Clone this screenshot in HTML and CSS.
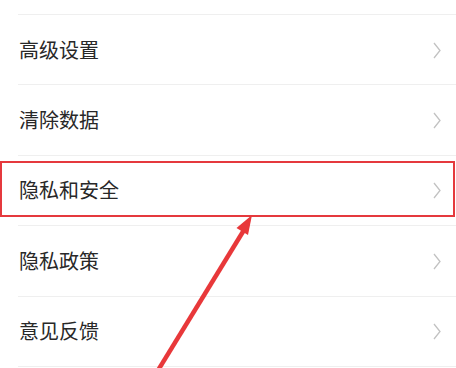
FILE: index.html
```html
<!DOCTYPE html>
<html lang="zh-CN">
<head>
<meta charset="utf-8">
<link rel="stylesheet" href="styles.css">
</head>
<body>
<div class="page">
  <div class="list">
    <div class="top-gap"></div>
    <div class="row"><span class="label">高级设置</span><svg class="chev" width="8" height="17" viewBox="0 0 8 17"><polyline points="1,1 7,8.5 1,16"/></svg></div>
    <div class="row"><span class="label">清除数据</span><svg class="chev" width="8" height="17" viewBox="0 0 8 17"><polyline points="1,1 7,8.5 1,16"/></svg></div>
    <div class="row"><span class="label">隐私和安全</span><svg class="chev" width="8" height="17" viewBox="0 0 8 17"><polyline points="1,1 7,8.5 1,16"/></svg></div>
    <div class="row"><span class="label">隐私政策</span><svg class="chev" width="8" height="17" viewBox="0 0 8 17"><polyline points="1,1 7,8.5 1,16"/></svg></div>
    <div class="row"><span class="label">意见反馈</span><svg class="chev" width="8" height="17" viewBox="0 0 8 17"><polyline points="1,1 7,8.5 1,16"/></svg></div>
  </div>
  <div class="highlight"></div>
  <svg class="arrow" width="456" height="368" viewBox="0 0 456 368">
    <line x1="157" y1="372" x2="244" y2="230" />
    <polygon points="252,215 248,235 236.5,228" />
  </svg>
</div>
</body>
</html>
```
FILE: styles.css
```css
html, body {
  margin: 0;
  padding: 0;
  background: #ffffff;
}
.page {
  position: relative;
  width: 456px;
  height: 368px;
  overflow: hidden;
  font-family: "Noto Sans CJK SC", "Noto Sans", sans-serif;
}
.list {
  display: flex;
  flex-direction: column;
}
.top-gap {
  height: 15px;
  margin-left: 18px;
  border-bottom: 1px solid #efefef;
  box-sizing: border-box;
}
.row {
  box-sizing: border-box;
  height: 70.4px;
  margin-left: 18px;
  padding-right: 15px;
  border-bottom: 1px solid #efefef;
  display: flex;
  align-items: center;
  justify-content: space-between;
}
.label {
  font-size: 20px;
  color: #282828;
  line-height: 1;
  margin-left: 1px;
}
.chev {
  display: block;
  margin-top: 1px;
}
.chev polyline {
  fill: none;
  stroke: #c2c2c2;
  stroke-width: 1.3;
}
.highlight {
  position: absolute;
  left: 0;
  top: 161px;
  width: 455px;
  height: 56px;
  box-sizing: border-box;
  border: 2.5px solid #e5393d;
}
.arrow {
  position: absolute;
  left: 0;
  top: 0;
}
.arrow line {
  stroke: #e8383a;
  stroke-width: 4.5;
}
.arrow polygon {
  fill: #e8383a;
}
```
